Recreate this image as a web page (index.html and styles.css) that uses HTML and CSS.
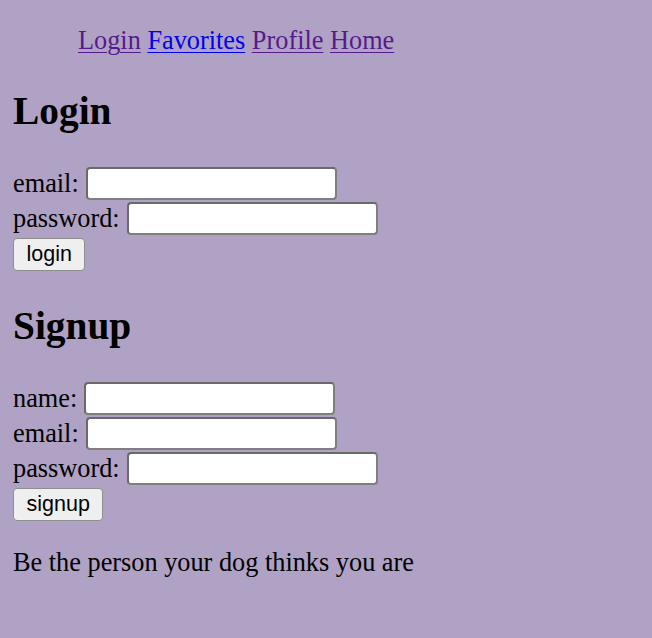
FILE: index.html
```html
<!DOCTYPE html>
<html>
<head>
<meta charset="utf-8">
<title>Dog App</title>
<link rel="stylesheet" href="styles.css">
</head>
<body>
<ul class="nav">
  <li><a class="nav-link visited" href="#login">Login</a></li>
  <li><a class="nav-link" href="#favorites">Favorites</a></li>
  <li><a class="nav-link visited" href="#profile">Profile</a></li>
  <li><a class="nav-link visited" href="#home">Home</a></li>
</ul>
<h2 class="title">Login</h2>
<form class="form">
  <label class="row">email:<input class="field" type="text"></label>
  <label class="row">password:<input class="field" type="password"></label>
  <div class="actions"><button class="btn" type="button">login</button></div>
</form>
<h2 class="title">Signup</h2>
<form class="form">
  <label class="row">name:<input class="field" type="text"></label>
  <label class="row">email:<input class="field" type="text"></label>
  <label class="row">password:<input class="field" type="password"></label>
  <div class="actions"><button class="btn" type="button">signup</button></div>
</form>
<p class="motto">Be the person your dog thinks you are</p>
</body>
</html>
```
FILE: styles.css
```css
html {
  background: #b0a2c4;
}
body {
  margin: 26px 13px 13px;
  font-family: "Liberation Serif", "Times New Roman", serif;
  font-size: 26.3px;
  color: #000;
}
.nav {
  margin: 0 0 26px;
  padding-left: 65px;
  list-style: none;
}
.nav li {
  display: inline;
}
.nav-link {
  color: #0000ee;
  text-decoration: underline;
  text-decoration-thickness: 1px;
  text-underline-offset: 3px;
}
.nav-link.visited {
  color: #551a8b;
}
.title {
  font-size: 39.4px;
  font-weight: bold;
  margin: 32px 0;
}
.form {
  margin: 0;
  display: flex;
  flex-direction: column;
  align-items: flex-start;
}
.row {
  display: flex;
  align-items: center;
  gap: 7px;
  height: 35px;
}
.field {
  box-sizing: border-box;
  width: 251px;
  height: 33px;
  font-family: "Liberation Sans", Arial, sans-serif;
  font-size: 21px;
  padding: 1px 3px;
  border: 2px solid #7f7f7f;
  border-top-color: #6a6a6a;
  border-left-color: #6a6a6a;
  border-radius: 4px;
  background: #fff;
}
.actions {
  padding-top: 2px;
}
.btn {
  display: block;
  box-sizing: border-box;
  height: 33px;
  padding: 0 12.5px;
  font-family: "Liberation Sans", Arial, sans-serif;
  font-size: 21.5px;
  color: #000;
  background: #efefef;
  border: 1px solid #8e8e8e;
  border-radius: 4px;
}
.motto {
  margin: 27px 0;
}
```
